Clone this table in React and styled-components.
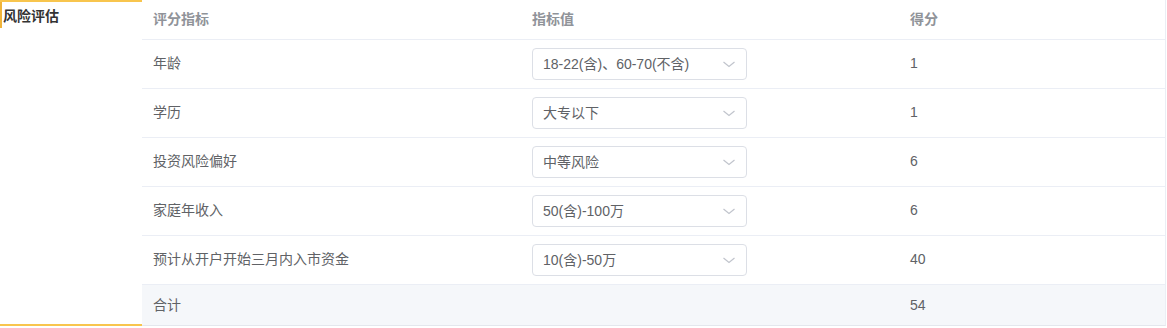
import React from "react";
import styled, { createGlobalStyle } from "styled-components";

const Global = createGlobalStyle`
  html, body { margin: 0; padding: 0; background: #fff; }
  body { font-family: "Liberation Sans", "Noto Sans CJK SC", sans-serif; }
`;

const Page = styled.div`
  display: flex;
  width: 1166px;
  height: 326px;
`;

const Sidebar = styled.div`
  width: 142px;
  flex: none;
  box-sizing: border-box;
  border-top: 2px solid #f8c54d;
  border-bottom: 2px solid #f8c54d;
`;

const Tab = styled.div`
  height: 26px;
  border-left: 2px solid #f0b43a;
  padding-left: 1px;
  font-size: 14px;
  font-weight: bold;
  color: #333;
  line-height: 29px;
`;

const Table = styled.div`
  flex: 1;
  display: flex;
  flex-direction: column;
  border-right: 1px solid #ebeef5;
  border-bottom: 1px solid #e4e7ed;
`;

const Row = styled.div`
  display: grid;
  grid-template-columns: 379px 378px 1fr;
  height: ${(p) => p.$h}px;
  border-bottom: 1px solid #ebeef5;
  background: ${(p) => (p.$footer ? "#f5f7fa" : "#fff")};
  ${(p) => (p.$footer ? "border-bottom: none;" : "")}
  align-items: center;
`;

const Cell = styled.div`
  padding-left: 11px;
  font-size: 14px;
  line-height: 20px;
  margin-top: ${(p) => p.$shift || 0}px;
  color: ${(p) => (p.$head ? "#909399" : "#606266")};
  font-weight: ${(p) => (p.$head ? "bold" : "normal")};
`;

const Select = styled.div`
  width: 215px;
  height: 32px;
  box-sizing: border-box;
  border: 1px solid #dcdfe6;
  border-radius: 4px;
  display: flex;
  align-items: center;
  justify-content: space-between;
  padding: 0 10px 0 10px;
  font-size: 14px;
  color: #606266;
`;

const Arrow = () => (
  <svg width="14" height="14" viewBox="0 0 14 14">
    <path d="M1.5 5 L7 9.5 L12.5 5" fill="none" stroke="#c0c4cc" strokeWidth="1.2" />
  </svg>
);

const rows = [
  ["年龄", "18-22(含)、60-70(不含)", "1"],
  ["学历", "大专以下", "1"],
  ["投资风险偏好", "中等风险", "6"],
  ["家庭年收入", "50(含)-100万", "6"],
  ["预计从开户开始三月内入市资金", "10(含)-50万", "40"],
];

export default function App() {
  return (
    <>
      <Global />
      <Page>
        <Sidebar>
          <Tab>风险评估</Tab>
        </Sidebar>
        <Table>
          <Row $h={40}>
            <Cell $head $shift={-1}>评分指标</Cell>
            <Cell $head $shift={-1}>指标值</Cell>
            <Cell $head $shift={-1}>得分</Cell>
          </Row>
          {rows.map((r) => (
            <Row $h={49} key={r[0]}>
              <Cell $shift={-2}>{r[0]}</Cell>
              <Cell>
                <Select>
                  <span>{r[1]}</span>
                  <Arrow />
                </Select>
              </Cell>
              <Cell $shift={-2}>{r[2]}</Cell>
            </Row>
          ))}
          <Row $h={41} $footer>
            <Cell>合计</Cell>
            <Cell />
            <Cell>54</Cell>
          </Row>
        </Table>
      </Page>
    </>
  );
}
